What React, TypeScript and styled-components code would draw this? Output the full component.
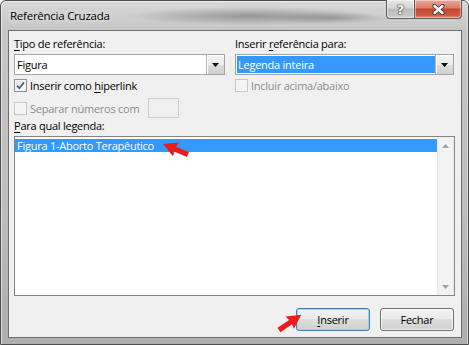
import styled, { createGlobalStyle } from "styled-components";

const GlobalStyle = createGlobalStyle`
  html, body {
    margin: 0;
    padding: 0;
    background: #ffffff;
  }
  body {
    font-family: "Open Sans", "Noto Sans", sans-serif;
    font-size: 11px;
    letter-spacing: -0.25px;
    color: #000;
  }
`;

const Window = styled.div`
  position: relative;
  width: 469px;
  height: 345px;
  box-sizing: border-box;
  display: flex;
  flex-direction: column;
  padding: 0 6px 6px 7px;
  border: 1px solid #4d4d4d;
  border-radius: 6px 6px 0 0;
  background:
    radial-gradient(ellipse 125px 9px at 250px 15px, rgba(70, 70, 70, 0.42), rgba(70, 70, 70, 0) 100%),
    radial-gradient(ellipse 60px 6px at 330px 17px, rgba(70, 70, 70, 0.3), rgba(70, 70, 70, 0) 100%),
    linear-gradient(to bottom, #d7d7d7 0px, #c6c6c6 30px, #bdbdbd 200px, #aeaeae 100%);
  box-shadow: inset 1px 1px 0 rgba(255, 255, 255, 0.55), inset -1px 0 0 rgba(255, 255, 255, 0.4);
`;

const TitleBar = styled.div`
  height: 29px;
  display: flex;
  align-items: flex-start;
`;

const TitleText = styled.div`
  margin: 7px 0 0 2px;
  line-height: 16px;
  font-size: 11.5px;
  color: #000;
  text-shadow: 0 0 6px rgba(255, 255, 255, 0.9);
`;

const CaptionButtons = styled.div`
  margin: -1px 0 0 auto;
  display: flex;
`;

const CaptionButton = styled.div<{ $kind: "help" | "close" }>`
  width: ${(p) => (p.$kind === "close" ? "47px" : "29px")};
  height: 19px;
  box-sizing: border-box;
  display: flex;
  align-items: center;
  justify-content: center;
  border: 1px solid #5c5c5c;
  border-top: none;
  border-left: ${(p) => (p.$kind === "close" ? "none" : "1px solid #5c5c5c")};
  border-radius: ${(p) => (p.$kind === "close" ? "0 0 4px 0" : "0 0 0 4px")};
  background: ${(p) =>
    p.$kind === "close"
      ? "linear-gradient(to bottom, #e9a99b 0%, #d87b68 45%, #c4452f 50%, #cf5c45 85%, #de8a72 100%)"
      : "linear-gradient(to bottom, #e8e8e8 0%, #d4d4d4 45%, #bcbcbc 50%, #c6c6c6 85%, #d6d6d6 100%)"};
  box-shadow: inset 0 0 0 1px rgba(255, 255, 255, 0.45);
  color: #fff;
  font-family: "DejaVu Sans", sans-serif;
  font-weight: bold;
  font-size: 13px;
  letter-spacing: 0;
  text-shadow: 0 0 1px #333, 0 0 1px #333, 0 0 2px #555;
`;

const Client = styled.div`
  flex: 1;
  box-sizing: border-box;
  display: flex;
  flex-direction: column;
  padding: 5px 6px 0 5px;
  border: 1px solid #6f6f6f;
  background: #f0f0f0;
`;

const Columns = styled.div`
  display: grid;
  grid-template-columns: 211px 219px;
  column-gap: 10px;
`;

const Column = styled.div`
  display: flex;
  flex-direction: column;
`;

const Label = styled.div<{ $disabled?: boolean }>`
  line-height: 16px;
  height: 16px;
  margin-bottom: 2px;
  color: ${(p) => (p.$disabled ? "#8d8d8d" : "#000")};
  white-space: nowrap;
`;

const Key = styled.span`
  text-decoration: underline;
  text-underline-offset: 2px;
`;

const Combo = styled.div`
  height: 21px;
  box-sizing: border-box;
  display: flex;
  border: 1px solid #a5a5a5;
  background: #fff;
`;

const ComboValue = styled.div<{ $selected?: boolean }>`
  flex: 1;
  margin: 1px 0 1px 1px;
  padding-left: 1px;
  line-height: 17px;
  background: ${(p) => (p.$selected ? "#3399ff" : "transparent")};
  color: ${(p) => (p.$selected ? "#fff" : "#000")};
`;

const DropButton = styled.div`
  width: 17px;
  display: flex;
  align-items: center;
  justify-content: center;
  border-left: 1px solid #b4b4b4;
  background: linear-gradient(to bottom, #f4f4f4 0%, #ebebeb 50%, #dddddd 51%, #d0d0d0 100%);
  box-shadow: inset 1px 1px 0 #fdfdfd;
`;

const CheckRow = styled.div<{ $disabled?: boolean; $gapTop: number; $height: number }>`
  display: flex;
  align-items: center;
  gap: 3px;
  margin-top: ${(p) => p.$gapTop}px;
  height: ${(p) => p.$height}px;
  color: ${(p) => (p.$disabled ? "#8d8d8d" : "#000")};
  white-space: nowrap;
`;

const Box = styled.span<{ $disabled?: boolean }>`
  width: 13px;
  height: 13px;
  flex: none;
  box-sizing: border-box;
  display: flex;
  align-items: center;
  justify-content: center;
  border: 1px solid ${(p) => (p.$disabled ? "#c6c6c6" : "#8e8f8f")};
  background: ${(p) =>
    p.$disabled ? "#f4f4f4" : "linear-gradient(135deg, #d9dbdd 0%, #f2f2f2 55%, #fdfdfd 100%)"};
  box-shadow: inset 0 0 0 1px ${(p) => (p.$disabled ? "#f7f7f7" : "#f4f4f4")};
`;

const SmallInput = styled.div`
  width: 31px;
  height: 20px;
  box-sizing: border-box;
  margin-left: 6px;
  border: 1px solid #cccccc;
  background: #f0f0f0;
`;

const ListBox = styled.div`
  height: 160px;
  box-sizing: border-box;
  display: flex;
  border: 1px solid #848484;
  background: #fff;
`;

const ListItems = styled.div`
  flex: 1;
  padding-top: 2px;
`;

const ListItem = styled.div<{ $selected?: boolean }>`
  height: 13px;
  line-height: 13px;
  padding-left: 2px;
  background: ${(p) => (p.$selected ? "#3399ff" : "transparent")};
  color: ${(p) => (p.$selected ? "#fff" : "#000")};
  white-space: nowrap;
`;

const ScrollBar = styled.div`
  width: 17px;
  display: flex;
  flex-direction: column;
  justify-content: space-between;
  background: linear-gradient(to right, #e6e6e6 0px, #f3f3f3 2px, #f3f3f3 15px, #eaeaea 100%);
`;

const ScrollArrow = styled.div`
  height: 17px;
  display: flex;
  align-items: center;
  justify-content: center;
`;

const ButtonRow = styled.div`
  display: flex;
  justify-content: flex-end;
  gap: 10px;
  margin-top: 12px;
  padding-right: 1px;
`;

const Button = styled.div<{ $default?: boolean }>`
  width: 74px;
  height: 23px;
  box-sizing: border-box;
  display: flex;
  align-items: center;
  justify-content: center;
  border: 1px solid ${(p) => (p.$default ? "#3c7fb1" : "#707070")};
  border-radius: 3px;
  background: linear-gradient(to bottom, #f2f2f2 0%, #ebebeb 45%, #dddddd 50%, #cfcfcf 100%);
  box-shadow: inset 0 0 0 1px ${(p) => (p.$default ? "#9fd4f3" : "rgba(255,255,255,0.7)")};
  color: #000;
`;

const Annotations = styled.svg`
  position: absolute;
  left: -1px;
  top: -1px;
  pointer-events: none;
`;

function ArrowDown() {
  return (
    <svg width="7" height="4" viewBox="0 0 7 4">
      <path d="M0 0h7L3.5 4z" fill="#000" />
    </svg>
  );
}

function CheckMark() {
  return (
    <svg width="9" height="9" viewBox="0 0 9 9">
      <path d="M1 4.6L3.4 7.2L8 1.4" fill="none" stroke="#4a5f8c" strokeWidth="1.8" />
    </svg>
  );
}

function ScrollTriangle({ up }: { up?: boolean }) {
  return (
    <svg width="7" height="4" viewBox="0 0 7 4">
      <path d={up ? "M0 4h7L3.5 0z" : "M0 0h7L3.5 4z"} fill="#a3a3a3" />
    </svg>
  );
}

function CloseGlyph() {
  return (
    <svg width="13" height="11" viewBox="0 0 13 11">
      <path d="M2.5 2L10.5 9M10.5 2L2.5 9" stroke="#3a3a3a" strokeWidth="4.2" strokeLinecap="round" />
      <path d="M2.5 2L10.5 9M10.5 2L2.5 9" stroke="#ffffff" strokeWidth="2.4" strokeLinecap="round" />
    </svg>
  );
}

const ARROW = "0,-2.6 14,-2.6 13,-7.5 27,0 13,7.5 14,2.6 0,2.6";

export default function App() {
  return (
    <>
      <GlobalStyle />
      <Window>
        <TitleBar>
          <TitleText>Referência Cruzada</TitleText>
          <CaptionButtons>
            <CaptionButton $kind="help">?</CaptionButton>
            <CaptionButton $kind="close">
              <CloseGlyph />
            </CaptionButton>
          </CaptionButtons>
        </TitleBar>
        <Client>
          <Columns>
            <Column>
              <Label>
                <Key>T</Key>ipo de referência:
              </Label>
              <Combo>
                <ComboValue>Figura</ComboValue>
                <DropButton>
                  <ArrowDown />
                </DropButton>
              </Combo>
              <CheckRow $gapTop={4} $height={13}>
                <Box>
                  <CheckMark />
                </Box>
                <span>
                  Inserir como <Key>h</Key>iperlink
                </span>
              </CheckRow>
              <CheckRow $gapTop={6} $height={20} $disabled>
                <Box $disabled />
                <span>Separar números com</span>
                <SmallInput />
              </CheckRow>
            </Column>
            <Column>
              <Label>
                Inserir <Key>r</Key>eferência para:
              </Label>
              <Combo>
                <ComboValue $selected>Legenda inteira</ComboValue>
                <DropButton>
                  <ArrowDown />
                </DropButton>
              </Combo>
              <CheckRow $gapTop={4} $height={13} $disabled>
                <Box $disabled />
                <span>Incluir acima/abaixo</span>
              </CheckRow>
            </Column>
          </Columns>
          <Label>
            <Key>P</Key>ara qual legenda:
          </Label>
          <ListBox>
            <ListItems>
              <ListItem $selected>Figura 1-Aborto Terapêutico</ListItem>
            </ListItems>
            <ScrollBar>
              <ScrollArrow>
                <ScrollTriangle up />
              </ScrollArrow>
              <ScrollArrow>
                <ScrollTriangle />
              </ScrollArrow>
            </ScrollBar>
          </ListBox>
          <ButtonRow>
            <Button $default>
              <span>
                <Key>I</Key>nserir
              </span>
            </Button>
            <Button>Fechar</Button>
          </ButtonRow>
        </Client>
        <Annotations width="469" height="345" viewBox="0 0 469 345">
          <polygon points={ARROW} fill="#ec1c1c" transform="translate(188 154.5) rotate(202.6)" />
          <polygon points={ARROW} fill="#ec1c1c" transform="translate(279 330) rotate(-34.3)" />
        </Annotations>
      </Window>
    </>
  );
}
